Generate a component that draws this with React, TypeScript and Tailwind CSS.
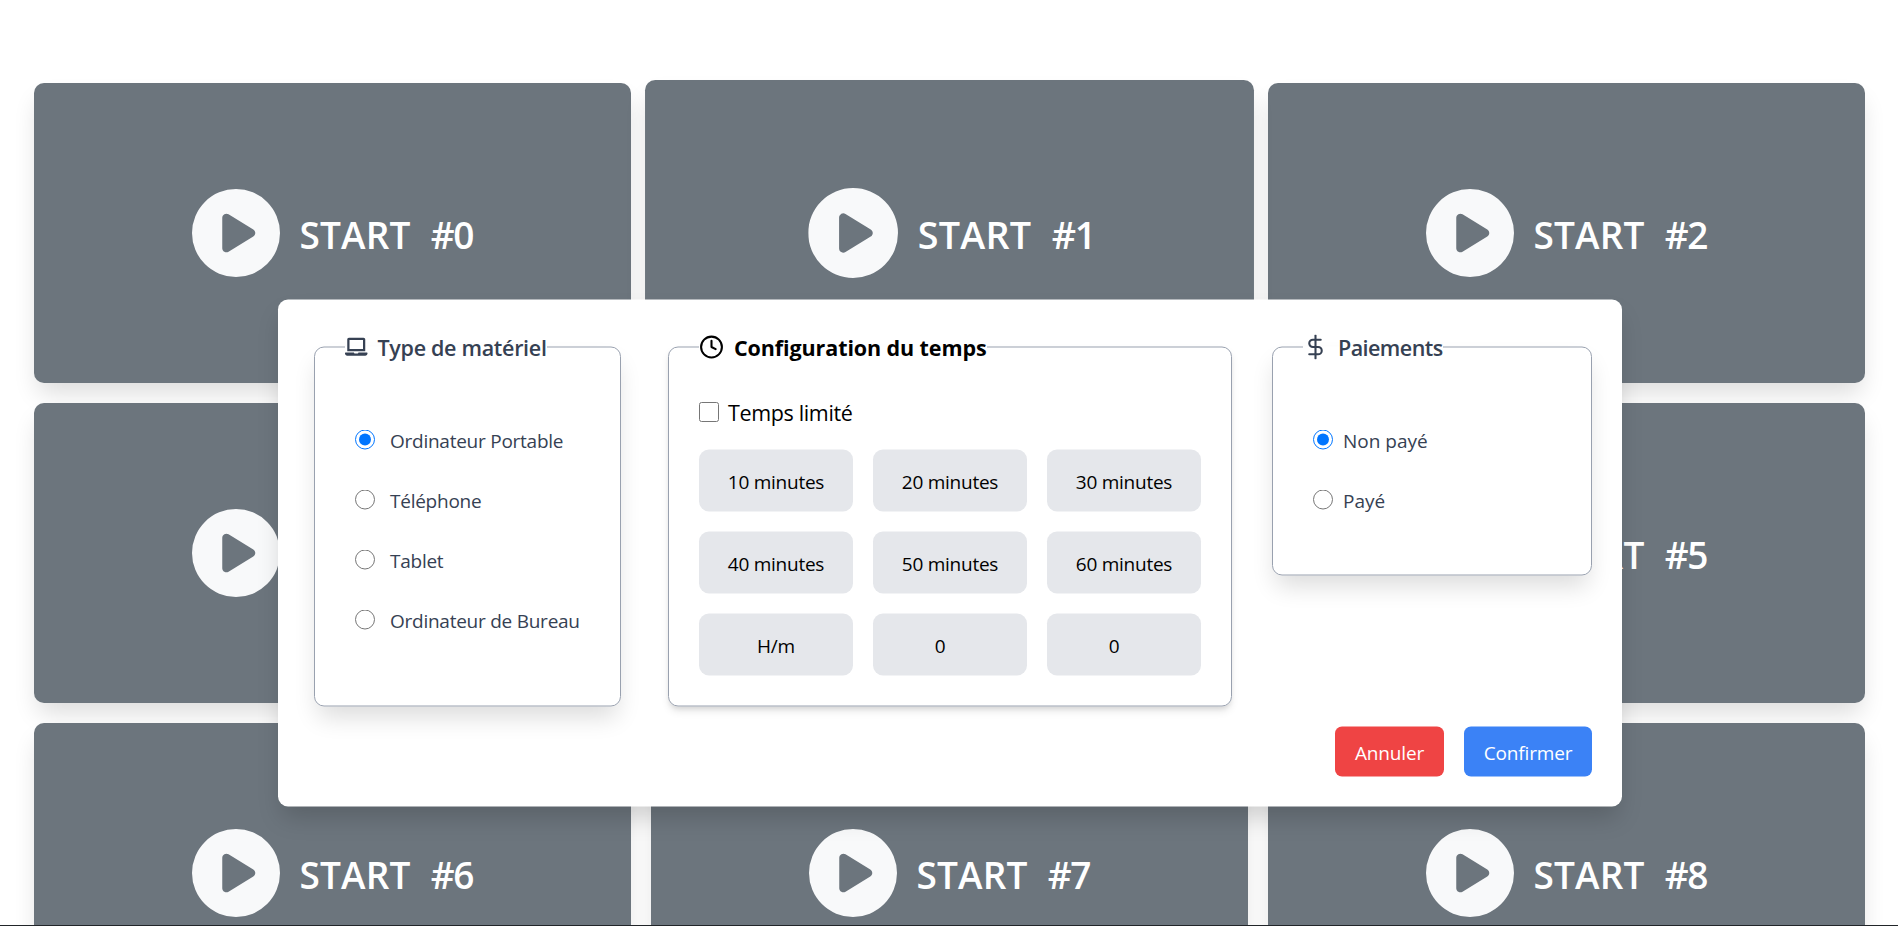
import { useState } from "react";
import type { ReactNode } from "react";
import { FaLaptop } from "react-icons/fa";
import { FaCirclePlay } from "react-icons/fa6";
import { FiClock, FiDollarSign } from "react-icons/fi";

const stations = [0, 1, 2, 3, 4, 5, 6, 7, 8];
const devices = ["Ordinateur Portable", "Téléphone", "Tablet", "Ordinateur de Bureau"];
const payments = ["Non payé", "Payé"];
const durations = [10, 20, 30, 40, 50, 60];

function StationCard({ id, raised }: { id: number; raised: boolean }) {
  return (
    <button
      className={`flex h-[300px] items-center justify-center rounded-[10px] bg-[#6c757d] shadow-[0_14px_24px_-4px_rgba(0,0,0,0.14)] ${
        raised ? "scale-[1.02] pl-[4px]" : ""
      }`}
    >
      <FaCirclePlay className="mr-[19.5px] size-[88px] text-[#f8f9fa]" />
      <span className="flex gap-5 pt-1 text-[37px] font-semibold text-white">
        <span className="tracking-[0.2px]">START</span>
        <span className="tracking-[-1.3px]">#{id}</span>
      </span>
    </button>
  );
}

function Legend({ icon, children, className }: { icon: ReactNode; children: ReactNode; className: string }) {
  return (
    <legend className={`flex h-[34px] items-center gap-2.5 whitespace-nowrap text-[21.5px] ${className}`}>
      {icon}
      <span className="pt-0.5">{children}</span>
    </legend>
  );
}

function RadioRow({
  name,
  label,
  checked,
  onChange,
  className,
}: {
  name: string;
  label: string;
  checked: boolean;
  onChange: () => void;
  className: string;
}) {
  return (
    <label className={`flex h-[60px] items-center whitespace-nowrap text-[19px] text-gray-700 ${className}`}>
      <input
        type="radio"
        name={name}
        checked={checked}
        onChange={onChange}
        className="size-5 translate-y-px"
      />
      <span className="pt-1">{label}</span>
    </label>
  );
}

export default function App() {
  const [device, setDevice] = useState(devices[0]);
  const [payment, setPayment] = useState(payments[0]);
  const [limited, setLimited] = useState(false);

  return (
    <div className="relative h-[926px] overflow-hidden border-b border-[#212529] bg-white font-['Open_Sans','Noto_Sans',sans-serif]">
      <main className="grid grid-cols-3 gap-5 pt-[83px] pr-[33px] pl-[34px]">
        {stations.map((id) => (
          <StationCard key={id} id={id} raised={id === 1} />
        ))}
      </main>

      <div className="absolute top-[300px] left-[278px] flex h-[507px] w-[1344px] translate-y-[-0.5px] flex-col rounded-[10px] bg-white pr-[30px] pl-9 shadow-[0_14px_24px_-4px_rgba(0,0,0,0.17)]">
        <div className="flex items-start pt-[30px]">
          <fieldset className="h-[377px] w-[307px] rounded-[10px] border border-gray-400 pr-5 pl-[30px] shadow-[0_14px_24px_-4px_rgba(0,0,0,0.14)]">
            <Legend
              icon={<FaLaptop className="size-[22.5px]" />}
              className="font-semibold tracking-[-0.3px] text-gray-700"
            >
              Type de matériel
            </Legend>
            <div className="pt-[45px] pl-[10px]">
              {devices.map((item) => (
                <RadioRow
                  key={item}
                  name="device"
                  label={item}
                  checked={device === item}
                  onChange={() => setDevice(item)}
                  className="gap-[15px] tracking-[-0.25px]"
                />
              ))}
            </div>
          </fieldset>

          <fieldset className="ml-[47px] h-[377px] w-[564px] rounded-[10px] border border-gray-400 px-[30px] shadow-[0_5px_8px_-1px_rgba(0,0,0,0.1),0_3px_5px_-2px_rgba(0,0,0,0.1)]">
            <Legend icon={<FiClock className="size-[25px]" />} className="font-bold tracking-[-0.1px] text-black">
              Configuration du temps
            </Legend>
            <label className="flex items-center gap-[9px] pt-[34px] text-[21.5px] leading-[30px] tracking-[-0.35px]">
              <input
                type="checkbox"
                checked={limited}
                onChange={() => setLimited(!limited)}
                className="size-5 translate-y-[-0.5px]"
              />
              <span>Temps limité</span>
            </label>
            <div className="grid grid-cols-3 gap-5 pt-[22px] text-[19px] tracking-[-0.25px]">
              {durations.map((minutes) => (
                <button key={minutes} className="h-[62px] rounded-[10px] bg-[#e5e7eb] pt-[3px]">
                  {minutes} minutes
                </button>
              ))}
              <div className="flex h-[62px] items-center justify-center rounded-[10px] bg-[#e5e7eb] pt-[3px]">H/m</div>
              <div className="flex h-[62px] items-center justify-center rounded-[10px] bg-[#e5e7eb] pt-[3px] pr-5">0</div>
              <div className="flex h-[62px] items-center justify-center rounded-[10px] bg-[#e5e7eb] pt-[3px] pr-5">0</div>
            </div>
          </fieldset>

          <fieldset className="ml-10 h-[246px] w-[320px] rounded-[10px] border border-gray-400 px-[30px] shadow-[0_14px_24px_-4px_rgba(0,0,0,0.14)]">
            <Legend
              icon={<FiDollarSign className="size-[25px]" />}
              className="font-semibold tracking-[-0.55px] text-gray-700"
            >
              Paiements
            </Legend>
            <div className="pt-[45px] pl-[10px]">
              {payments.map((item) => (
                <RadioRow
                  key={item}
                  name="payment"
                  label={item}
                  checked={payment === item}
                  onChange={() => setPayment(item)}
                  className="gap-2.5"
                />
              ))}
            </div>
          </fieldset>
        </div>

        <div className="mt-5 flex justify-end gap-5 text-[19px] tracking-[-0.15px] text-white">
          <button className="h-[50px] w-[109px] rounded-[7px] bg-[#ef4444] pt-[3px]">Annuler</button>
          <button className="h-[50px] w-[128px] rounded-[7px] bg-[#3b82f6] pt-[3px]">Confirmer</button>
        </div>
      </div>
    </div>
  );
}
